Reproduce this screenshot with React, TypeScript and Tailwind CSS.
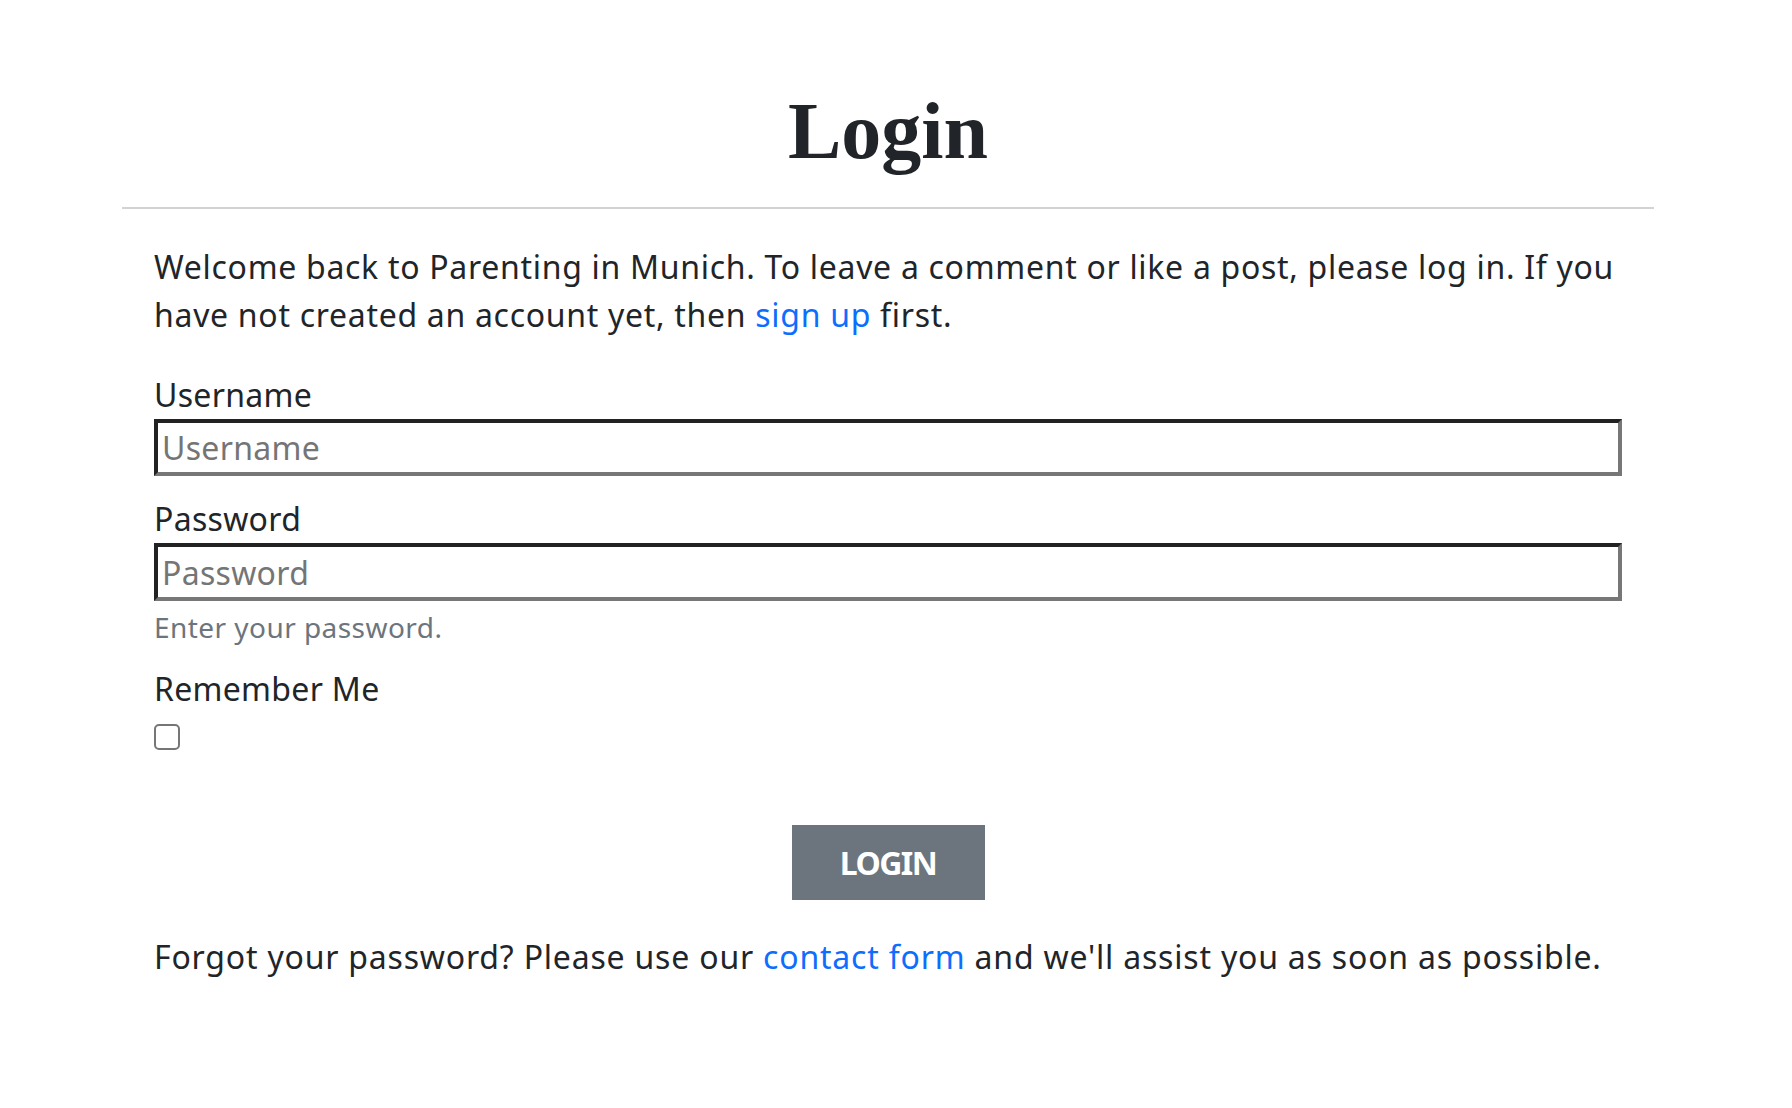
import React from "react";

export default function App() {
  return (
    <div className="min-h-[1108px] bg-white font-['Noto_Sans',sans-serif] text-[#212529]">
      <div className="ml-[122px] w-[1532px] pt-[83px]">
        <h1 className="text-center font-['Liberation_Serif',serif] text-[80px] font-bold leading-[96px] text-[#212529]">
          Login
        </h1>
        <hr className="mt-[28px] border-0 border-t-2 border-[#d3d3d3]" />
        <div className="px-[32px]">
          <p className="mt-[34px] text-[32px] leading-[48px] tracking-[0.7px]">
            Welcome back to Parenting in Munich. To leave a comment or like a post, please log in. If you have not created an account yet, then{" "}
            <a href="#" className="text-[#0d6efd]">sign up</a> first.
          </p>
          <form className="mt-[32px]" onSubmit={(e) => e.preventDefault()}>
            <label className="block text-[32px] leading-[48px] tracking-[0.3px]">Username</label>
            <input
              type="text"
              placeholder="Username"
              className="block h-[57px] w-full border-4 border-t-[#222222] border-l-[#222222] border-b-[#777777] border-r-[#777777] bg-white px-[4px] text-[32px] leading-[48px] tracking-[0.3px] text-[#212529] outline-none placeholder:text-[#757575]"
            />
            <label className="mt-[19px] block text-[32px] leading-[48px] tracking-[0.3px]">Password</label>
            <input
              type="password"
              placeholder="Password"
              className="block h-[58px] w-full border-4 border-t-[#222222] border-l-[#222222] border-b-[#777777] border-r-[#777777] bg-white px-[4px] text-[32px] leading-[48px] tracking-[0.3px] text-[#212529] outline-none placeholder:text-[#757575]"
            />
            <div className="mt-[5px] text-[28px] leading-[42px] tracking-[0.45px] text-[#6c757d]">Enter your password.</div>
            <label className="mt-[17px] block text-[32px] leading-[48px] tracking-[0.3px]">Remember Me</label>
            <input
              type="checkbox"
              className="mt-[11px] block h-[26px] w-[26px] appearance-none rounded-[5px] border-2 border-[#767676] bg-white"
            />
            <div className="mt-[75px] flex justify-center">
              <button
                type="submit"
                className="h-[75px] w-[193px] bg-[#6c757d] text-[32px] font-bold leading-[48px] tracking-[-1.5px] text-white"
              >
                LOGIN
              </button>
            </div>
          </form>
          <p className="mt-[33px] text-[32px] leading-[48px] tracking-[0.8px]">
            Forgot your password? Please use our{" "}
            <a href="#" className="text-[#0d6efd]">contact form</a> and we'll assist you as soon as possible.
          </p>
        </div>
      </div>
    </div>
  );
}
